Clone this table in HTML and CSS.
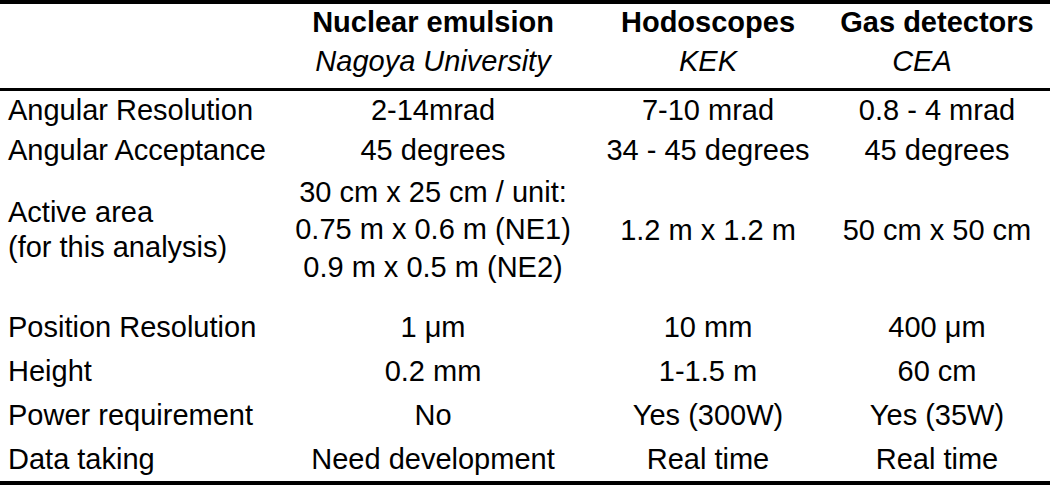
FILE: index.html
```html
<!DOCTYPE html>
<html>
<head>
<meta charset="utf-8">
<link rel="stylesheet" href="styles.css">
</head>
<body>
<table class="spec">
  <colgroup>
    <col class="c-label"><col class="c-ne"><col class="c-ho"><col class="c-gas">
  </colgroup>
  <thead>
    <tr class="h1">
      <th></th><th>Nuclear emulsion</th><th>Hodoscopes</th><th>Gas detectors</th>
    </tr>
    <tr class="h2">
      <th></th><th>Nagoya University</th><th>KEK</th><th class="cea">CEA</th>
    </tr>
  </thead>
  <tbody>
    <tr class="r1"><td class="lab">Angular Resolution</td><td>2-14mrad</td><td>7-10 mrad</td><td>0.8 - 4 mrad</td></tr>
    <tr class="r2"><td class="lab">Angular Acceptance</td><td>45 degrees</td><td>34 - 45 degrees</td><td>45 degrees</td></tr>
    <tr class="r3">
      <td class="lab"><div class="lab2">Active area<br>(for this analysis)</div></td>
      <td><div class="multi">30 cm x 25 cm / unit:<br>0.75 m x 0.6 m (NE1)<br>0.9 m x 0.5 m (NE2)</div></td>
      <td>1.2 m x 1.2 m</td>
      <td>50 cm x 50 cm</td>
    </tr>
    <tr class="r4"><td class="lab">Position Resolution</td><td>1 μm</td><td>10 mm</td><td>400 μm</td></tr>
    <tr class="r5"><td class="lab">Height</td><td>0.2 mm</td><td>1-1.5 m</td><td>60 cm</td></tr>
    <tr class="r6"><td class="lab">Power requirement</td><td>No</td><td>Yes (300W)</td><td>Yes (35W)</td></tr>
    <tr class="r7"><td class="lab">Data taking</td><td>Need development</td><td>Real time</td><td>Real time</td></tr>
  </tbody>
</table>
</body>
</html>
```

FILE: styles.css
```css
html, body {
  margin: 0;
  padding: 0;
  background: #ffffff;
}

.spec {
  width: 1050px;
  border-collapse: collapse;
  table-layout: fixed;
  font-family: "Liberation Sans", Arial, sans-serif;
  font-size: 29px;
  color: #000000;
  border-top: 4px solid #000;
  border-bottom: 4px solid #000;
}

.c-label { width: 274px; }
.c-ne { width: 318px; }
.c-ho { width: 232px; }
.c-gas { width: 226px; }

.spec th,
.spec td {
  padding: 0;
  text-align: center;
  vertical-align: middle;
  white-space: nowrap;
}

.spec td.lab {
  text-align: left;
  padding-left: 8px;
}

.h1 th {
  font-weight: bold;
  height: 36px;
  line-height: 36px;
}

.h2 th {
  font-weight: normal;
  font-style: italic;
  height: 30px;
  line-height: 30px;
  padding-top: 6px;
  padding-bottom: 12px;
  vertical-align: top;
  border-bottom: 3px solid #000;
}

.h2 th.cea {
  padding-right: 30px;
}

.r1 td { height: 39px; line-height: 39px; }
.r2 td { height: 41px; line-height: 41px; }
.r3 td { height: 118px; line-height: 37px; }
.r3 .multi { line-height: 37.5px; }
.r3 .lab2 { line-height: 35px; }
.r4 td { height: 44px; line-height: 44px; padding-top: 16px; }
.r5 td,
.r6 td,
.r7 td { height: 44px; line-height: 44px; }
```
